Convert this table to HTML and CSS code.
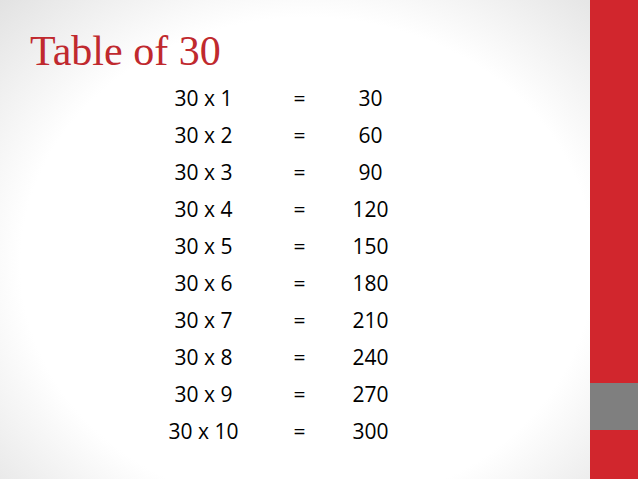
FILE: index.html
```html
<!DOCTYPE html>
<html>
<head>
<meta charset="utf-8">
<link rel="stylesheet" href="styles.css">
</head>
<body>
<div class="slide">
  <main class="content">
    <h1 class="title">Table of 30</h1>
    <div class="table">
      <span>30 x 1</span><span>=</span><span>30</span>
      <span>30 x 2</span><span>=</span><span>60</span>
      <span>30 x 3</span><span>=</span><span>90</span>
      <span>30 x 4</span><span>=</span><span>120</span>
      <span>30 x 5</span><span>=</span><span>150</span>
      <span>30 x 6</span><span>=</span><span>180</span>
      <span>30 x 7</span><span>=</span><span>210</span>
      <span>30 x 8</span><span>=</span><span>240</span>
      <span>30 x 9</span><span>=</span><span>270</span>
      <span>30 x 10</span><span>=</span><span>300</span>
    </div>
  </main>
  <aside class="sidebar">
    <div class="red top"></div>
    <div class="gray"></div>
    <div class="red bottom"></div>
  </aside>
</div>
</body>
</html>
```

FILE: styles.css
```css
html, body {
  margin: 0;
  padding: 0;
}
.slide {
  width: 638px;
  height: 479px;
  display: flex;
  overflow: hidden;
}
.content {
  flex: 1;
  background: radial-gradient(ellipse farthest-corner at 52% 55%, #ffffff 66%, #e2e2e2 100%);
  padding-top: 30px;
  box-sizing: border-box;
}
.title {
  margin: 0 0 0 30px;
  font-family: "Liberation Serif", serif;
  font-weight: normal;
  font-size: 42px;
  line-height: 1;
  color: #c0292e;
}
.table {
  margin-top: 7.5px;
  padding-left: 143px;
  display: grid;
  grid-template-columns: 121px 71px 71px;
  grid-auto-rows: 37.1px;
  font-family: "Open Sans", sans-serif;
  font-size: 21px;
  line-height: 37.1px;
  color: #000;
  text-align: center;
}
.sidebar {
  width: 48px;
  display: flex;
  flex-direction: column;
}
.red {
  background: #d1262d;
}
.top {
  height: 383px;
}
.gray {
  height: 47px;
  background: #7f7f7f;
}
.bottom {
  flex: 1;
}
```
